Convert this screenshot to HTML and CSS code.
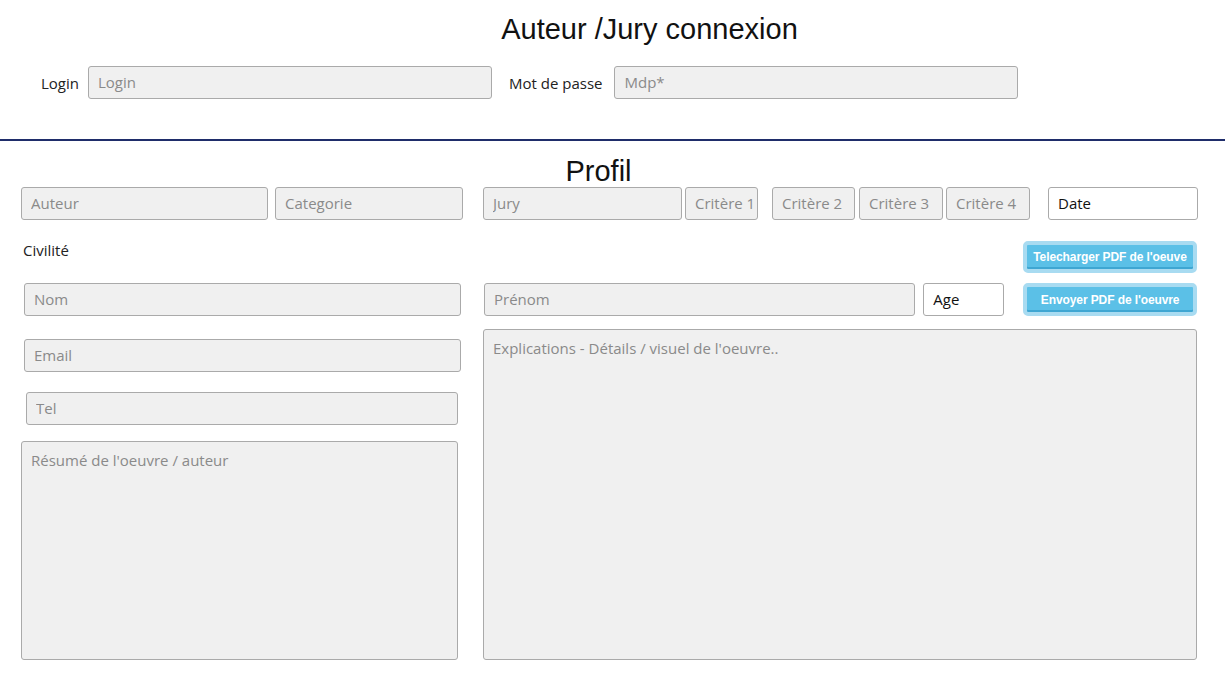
FILE: index.html
```html
<!DOCTYPE html>
<html lang="fr">
<head>
<meta charset="utf-8">
<title>Auteur /Jury connexion</title>
<link rel="stylesheet" href="styles.css">
</head>
<body>
<header class="connexion">
  <h1 class="title">Auteur /Jury connexion</h1>
  <div class="login-row">
    <label class="lbl">Login</label>
    <input class="field w-login" type="text" placeholder="Login">
    <label class="lbl lbl-mdp">Mot de passe</label>
    <input class="field w-mdp" type="password" placeholder="Mdp*">
  </div>
</header>
<hr class="sep">
<section class="profil">
  <h2 class="profil-title">Profil</h2>
  <div class="row-top">
    <div class="top-left">
      <input class="field w-auteur" type="text" placeholder="Auteur">
      <input class="field w-cat" type="text" placeholder="Categorie">
    </div>
    <div class="top-right">
      <input class="field w-jury" type="text" placeholder="Jury">
      <input class="field w-c1" type="text" placeholder="Critère 1">
      <input class="field w-c2 ml-c2" type="text" placeholder="Critère 2">
      <input class="field w-c3" type="text" placeholder="Critère 3">
      <input class="field w-c4" type="text" placeholder="Critère 4">
      <input class="field white w-date" type="text" value="Date">
    </div>
  </div>
  <div class="cols">
    <div class="col-left">
      <div class="civ">Civilité</div>
      <input class="field w-nom" type="text" placeholder="Nom">
      <input class="field w-nom mt-email" type="text" placeholder="Email">
      <input class="field w-tel mt-tel" type="text" placeholder="Tel">
      <textarea class="field area w-res mt-res" placeholder="Résumé de l'oeuvre / auteur"></textarea>
    </div>
    <div class="col-right">
      <div class="btn-row">
        <button class="btn" type="button">Telecharger PDF de l'oeuve</button>
      </div>
      <div class="mid-row">
        <input class="field w-prenom" type="text" placeholder="Prénom">
        <input class="field white w-age" type="text" value="Age">
        <button class="btn btn-tall" type="button">Envoyer PDF de l'oeuvre</button>
      </div>
      <textarea class="field area w-expl" placeholder="Explications - Détails / visuel de l'oeuvre.."></textarea>
    </div>
  </div>
</section>
</body>
</html>
```
FILE: styles.css
```css
* { box-sizing: border-box; }
html, body { margin: 0; padding: 0; background: #fff; }
body {
  font-family: "Open Sans", "DejaVu Sans", sans-serif;
  font-size: 15px;
  color: #222;
  width: 1225px;
  height: 692px;
  overflow: hidden;
}

.connexion { padding-top: 12px; }
.title {
  margin: 0;
  font-family: "Liberation Sans", Arial, sans-serif;
  font-weight: normal;
  font-size: 29px;
  line-height: 34px;
  text-align: center;
  padding-left: 74px;
  color: #111;
}
.login-row {
  display: flex;
  align-items: center;
  padding-left: 41px;
  margin-top: 20px;
}
.lbl { color: #222; font-size: 15px; margin-right: 9px; }
.lbl-mdp { margin-left: 17px; margin-right: 12px; }

.field {
  height: 33px;
  border: 1px solid #aaaaaa;
  border-radius: 3px;
  background: #f0f0f0;
  font-family: "Open Sans", "DejaVu Sans", sans-serif;
  font-size: 15px;
  color: #222;
  padding: 0 9px 1px;
  outline: none;
  margin: 0;
}
.field::placeholder { color: #8a8a8a; opacity: 1; }
.field.white { background: #fff; color: #111; }

.w-login { width: 404px; }
.w-mdp { width: 404px; }

.sep {
  margin: 40px 0 0 0;
  border: 0;
  height: 2px;
  background: #1f2d6a;
}

.profil { width: 1225px; }
.profil-title {
  margin: 0;
  width: 1197px;
  text-align: center;
  font-family: "Liberation Sans", Arial, sans-serif;
  font-weight: normal;
  font-size: 29px;
  line-height: 32px;
  height: 46px;
  padding-top: 14px;
  color: #111;
}
.row-top {
  display: flex;
  padding-left: 21px;
}
.top-left { display: flex; gap: 7px; }
.top-right { display: flex; margin-left: 20px; gap: 3px; }
.w-auteur { width: 247px; }
.w-cat { width: 188px; }
.w-jury { width: 199px; }
.w-c1 { width: 73px; padding: 0 0 1px 9px; }
.ml-c2 { margin-left: 11px; }
.w-c2 { width: 83px; }
.w-c3 { width: 84px; margin-left: 1px; }
.w-c4 { width: 84px; }
.w-date { width: 150px; margin-left: 15px; }

.cols {
  display: flex;
  padding-left: 21px;
}
.col-left {
  width: 442px;
  display: flex;
  flex-direction: column;
  align-items: flex-start;
}
.civ {
  margin-top: 20px;
  margin-left: 2px;
  height: 20px;
  line-height: 20px;
  font-size: 15px;
  color: #222;
}
.w-nom { width: 437px; margin-left: 3px; margin-top: 23px; }
.mt-email { margin-top: 23px; }
.w-tel { width: 432px; margin-left: 5px; }
.mt-tel { margin-top: 20px; }
.area {
  resize: none;
  padding: 8px 9px;
  line-height: 20px;
}
.w-res { width: 437px; height: 219px; margin-left: 0; }
.mt-res { margin-top: 16px; }

.col-right {
  width: 714px;
  margin-left: 20px;
  display: flex;
  flex-direction: column;
}
.btn-row {
  display: flex;
  justify-content: flex-end;
  margin-top: 21px;
}
.btn {
  width: 174px;
  height: 32px;
  padding: 0;
  border: 4px solid #a8dbf1;
  border-radius: 5px;
  background: #5bc0e7;
  box-shadow: inset 0 -2px 0 #3ea6d2;
  color: #fff;
  font-family: "Liberation Sans", Arial, sans-serif;
  font-weight: bold;
  font-size: 12px;
  letter-spacing: -0.1px;
  cursor: pointer;
}
.btn-tall { height: 33px; }
.mid-row {
  display: flex;
  align-items: center;
  margin-top: 10px;
}
.w-prenom { width: 432px; margin-left: 1px; }
.w-age { width: 81px; margin-left: 8px; }
.mid-row .btn { margin-left: 19px; }
.w-expl { width: 714px; height: 331px; margin-top: 13px; }
```
